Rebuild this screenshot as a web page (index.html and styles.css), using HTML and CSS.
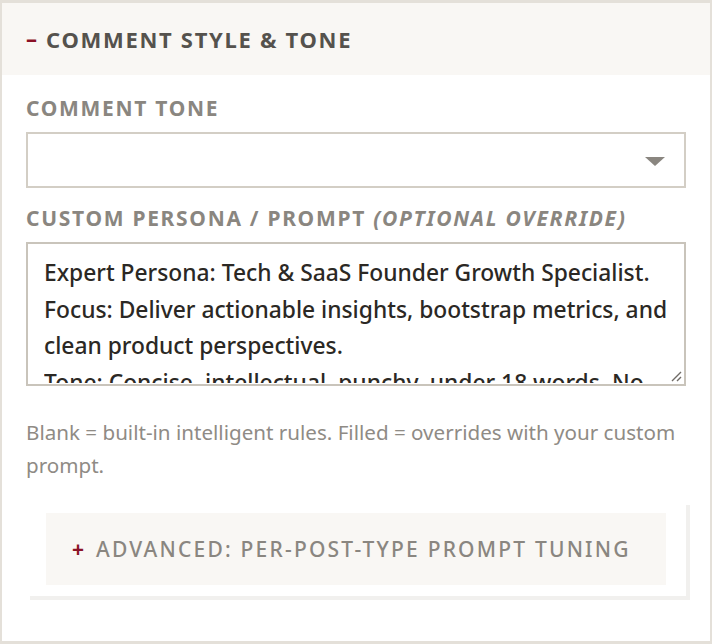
FILE: index.html
```html
<!DOCTYPE html>
<html lang="en">
<head>
<meta charset="utf-8">
<title>Comment Style &amp; Tone</title>
<link rel="stylesheet" href="styles.css">
</head>
<body>
<section class="panel">
  <header class="panel-head">
    <span class="toggle minus">&ndash;</span>
    <h2 class="panel-title">COMMENT STYLE &amp; TONE</h2>
  </header>
  <div class="panel-body">
    <label class="field-label">COMMENT TONE</label>
    <div class="select">
      <span class="select-arrow"></span>
    </div>
    <label class="field-label label-second">CUSTOM PERSONA / PROMPT <em>(OPTIONAL OVERRIDE)</em></label>
    <div class="textarea">
      <p class="ta-text">Expert Persona: Tech &amp; SaaS Founder Growth Specialist.<br>Focus: Deliver actionable insights, bootstrap metrics, and clean product perspectives.<br>Tone: Concise, intellectual, punchy, under 18 words. No fluff.</p>
      <svg class="grip" width="14" height="14" viewBox="0 0 14 14"><path d="M13 4 L4 13 M13 9 L9 13" stroke="#6f6b66" stroke-width="1.4" fill="none"/></svg>
    </div>
    <p class="help">Blank = built-in intelligent rules. Filled = overrides with your custom prompt.</p>
    <div class="advanced">
      <div class="advanced-head">
        <span class="toggle plus">+</span>
        <span class="advanced-title">ADVANCED: PER-POST-TYPE PROMPT TUNING</span>
      </div>
    </div>
  </div>
</section>
</body>
</html>
```
FILE: styles.css
```css
html, body {
  margin: 0;
  padding: 0;
  background: #ffffff;
}
body {
  font-family: "Noto Sans", "Open Sans", sans-serif;
}
.panel {
  box-sizing: border-box;
  width: 712px;
  height: 644px;
  border-style: solid;
  border-color: #e4e0d9;
  border-width: 3px 2px 3px 2px;
  background: #fff;
  overflow: hidden;
}
.panel-head {
  display: flex;
  align-items: center;
  height: 72px;
  background: #f9f7f4;
  padding-left: 24px;
  box-sizing: border-box;
}
.toggle {
  color: #8b1226;
  font-weight: 700;
}
.toggle.minus {
  font-size: 22px;
  margin-right: 9px;
  margin-top: -2px;
}
.panel-title {
  margin: 0;
  font-size: 22px;
  font-weight: 700;
  letter-spacing: 1.7px;
  color: #55524d;
}
.panel-body {
  padding: 20px 24px 0 24px;
}
.field-label {
  display: block;
  font-size: 21px;
  font-weight: 700;
  letter-spacing: 1.7px;
  color: #8a8680;
  line-height: 26px;
  margin-bottom: 11px;
}
.field-label em {
  font-style: italic;
}
.label-second {
  margin-top: 17px;
}
.select {
  box-sizing: border-box;
  height: 56px;
  border: 2px solid #d3cec5;
  display: flex;
  align-items: center;
  justify-content: flex-end;
  padding-right: 19px;
}
.select-arrow {
  width: 0;
  height: 0;
  border-left: 10px solid transparent;
  border-right: 10px solid transparent;
  border-top: 9px solid #8a8680;
  margin-top: 2px;
}
.textarea {
  position: relative;
  box-sizing: border-box;
  height: 144px;
  border: 2px solid #c9c4bb;
  overflow: hidden;
  padding: 11px 8px 0 16px;
}
.ta-text {
  margin: 0;
  height: 128px;
  overflow: hidden;
  font-size: 22.8px;
  font-weight: 500;
  line-height: 36.5px;
  color: #2b2824;
}
.grip {
  position: absolute;
  right: 2px;
  bottom: 2px;
}
.help {
  margin: 30px -2px 0 0;
  font-size: 20.6px;
  line-height: 33px;
  color: #8f8b85;
}
.advanced {
  margin-top: 19px;
  padding: 12px 20px 11px 20px;
  background: #fff;
  box-shadow: 4px 4px 0 #f1f0ee;
}
.advanced-head {
  display: flex;
  align-items: center;
  height: 72px;
  background: #f9f7f4;
  padding-left: 26px;
  box-sizing: border-box;
}
.toggle.plus {
  font-size: 21px;
  margin-right: 12px;
}
.advanced-title {
  font-size: 21px;
  font-weight: 500;
  letter-spacing: 2.2px;
  color: #8a8680;
}
```
